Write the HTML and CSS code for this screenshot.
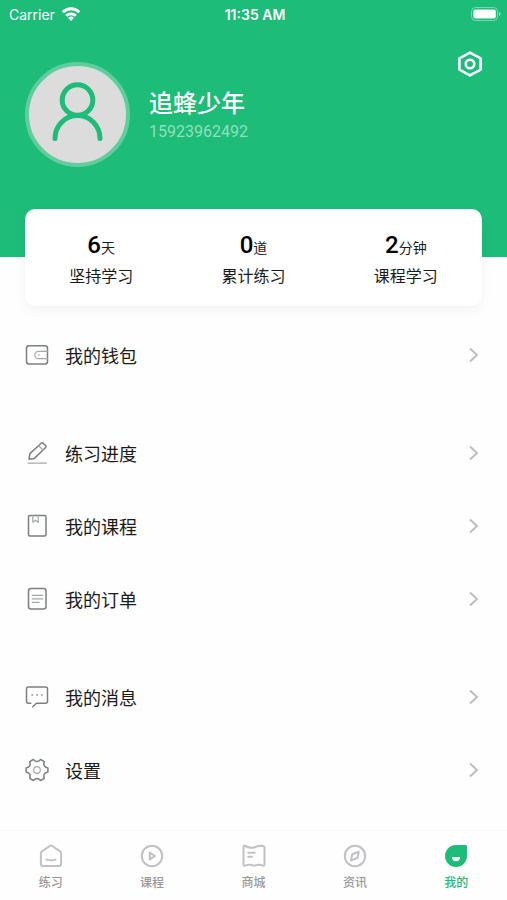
FILE: index.html
```html
<!DOCTYPE html>
<html lang="zh-CN">

<head>
    <meta charset="UTF-8">
    <meta name="viewport" content="width=device-width, initial-scale=1.0">
    <title>我的</title>
    <link rel="stylesheet" href="styles.css">
</head>

<body>

    <header class="header">
        <div class="status-bar">
            <div class="carrier">
                <span>Carrier</span>
                <svg width="20" height="16" viewBox="0 0 20 16" fill="none" stroke="#fff" stroke-width="3">
                    <path d="M1.8 6.2a11.6 11.6 0 0 1 16.4 0" />
                    <path d="M5.2 9.8a6.8 6.8 0 0 1 9.6 0" stroke-width="2.8" />
                    <path d="M10 15l-2.9-3a4.2 4.2 0 0 1 5.8 0z" fill="#fff" stroke="none" />
                </svg>
            </div>
            <span class="time">11:35 AM</span>
            <div class="battery">
                <svg width="30" height="14" viewBox="0 0 30 14">
                    <rect x=".5" y=".5" width="26" height="13" rx="4" fill="none" stroke="#fff" stroke-opacity=".4" />
                    <rect x="2.4" y="2.4" width="22.4" height="9.2" rx="2" fill="#fff" />
                    <path d="M28 5v4c2-.6 2-3.4 0-4z" fill="#fff" fill-opacity=".5" />
                </svg>
            </div>
        </div>

        <button class="setting" type="button" aria-label="设置">
            <svg width="28" height="28" viewBox="0 0 28 28" fill="none" stroke="#fff" stroke-width="2.6" stroke-linejoin="round">
                <path d="M14 2.6l10.600 5.800v11.200L14 25.4 3.4 19.6V8.4z" />
                <circle cx="14" cy="14" r="4.3" />
            </svg>
        </button>

        <div class="user">
            <div class="avatar">
                <svg width="97" height="97" viewBox="0 0 97 97" fill="none" stroke="#1dbc79" stroke-width="5" stroke-linecap="round">
                    <circle cx="48.5" cy="34" r="15.3" />
                    <path d="M26 72.5a22.5 23 0 0 1 45 0" />
                </svg>
            </div>
            <div>
                <h1 class="name">追蜂少年</h1>
                <p class="phone">15923962492</p>
            </div>
        </div>
    </header>

    <section class="stats">
        <div class="stat">
            <p class="stat-value"><b>6</b>天</p>
            <p class="stat-label">坚持学习</p>
        </div>
        <div class="stat">
            <p class="stat-value"><b>0</b>道</p>
            <p class="stat-label">累计练习</p>
        </div>
        <div class="stat">
            <p class="stat-value"><b>2</b>分钟</p>
            <p class="stat-label">课程学习</p>
        </div>
    </section>

    <main class="menu">
        <div class="menu-group">
            <a class="menu-item" href="#wallet">
                <svg class="icon" viewBox="0 0 24 24">
                    <rect x="1.5" y="2.8" width="21" height="18.2" rx="2.5" />
                    <path class="thin" d="M22.5 8.3h-9a3.7 3.7 0 0 0 0 7.4h9M13.2 12h1.2" />
                </svg>
                <span>我的钱包</span>
                <svg class="arrow" viewBox="0 0 16 16"><path d="M4 1.5L11 8l-7 6.5" /></svg>
            </a>
        </div>

        <div class="menu-group">
            <a class="menu-item" href="#progress">
                <svg class="icon" viewBox="0 0 24 24">
                    <path d="M4 18.2l.9-5.600L16.2 2.2q1-.8 2 0l2.400 2.300q.9 1 0 2L9.400 17.400z" />
                    <path class="thin" d="M13.6 4.8l4.6 4.4M3.200 22.200h18" />
                </svg>
                <span>练习进度</span>
                <svg class="arrow" viewBox="0 0 16 16"><path d="M4 1.5L11 8l-7 6.5" /></svg>
            </a>
            <a class="menu-item" href="#course">
                <svg class="icon" viewBox="0 0 24 24">
                    <rect x="3.5" y="1.5" width="17.5" height="20.6" rx="1.5" />
                    <path class="thin" d="M7.800 1.500v6.800l2.700-2 2.700 2V1.500" />
                </svg>
                <span>我的课程</span>
                <svg class="arrow" viewBox="0 0 16 16"><path d="M4 1.5L11 8l-7 6.5" /></svg>
            </a>
            <a class="menu-item" href="#order">
                <svg class="icon" viewBox="0 0 24 24">
                    <rect x="3.5" y="1.5" width="17.5" height="20.6" rx="2.5" />
                    <path class="thin" d="M7.200 8.300h10.600M7.200 11.800h10.600M7.200 15.300h7" />
                </svg>
                <span>我的订单</span>
                <svg class="arrow" viewBox="0 0 16 16"><path d="M4 1.5L11 8l-7 6.5" /></svg>
            </a>
        </div>

        <div class="menu-group">
            <a class="menu-item" href="#message">
                <svg class="icon" viewBox="0 0 24 24">
                    <path d="M5.800 18.200H3.500q-2 0-2-2V4q0-2 2-2h17q2 0 2 2v12.200q0 2-2 2h-9l-3.800 3.600" />
                    <path class="dots" d="M7.200 10h.1M12 10h.1M16.800 10h.1" />
                </svg>
                <span>我的消息</span>
                <svg class="arrow" viewBox="0 0 16 16"><path d="M4 1.5L11 8l-7 6.5" /></svg>
            </a>
            <a class="menu-item" href="#setting">
                <svg class="icon" viewBox="0 0 24 24">
                    <path d="M8.400 1.500Q12 5.700 15.600 1.500L19.300 3.600Q17.500 8.800 22.900 9.900V14.100Q17.500 15.200 19.300 20.400L15.600 22.500Q12 18.300 8.400 22.500L4.700 20.400Q6.500 15.200 1.100 14.100V9.900Q6.500 8.800 4.700 3.600z" />
                    <circle class="thin" cx="12" cy="12" r="3.3" />
                </svg>
                <span>设置</span>
                <svg class="arrow" viewBox="0 0 16 16"><path d="M4 1.5L11 8l-7 6.5" /></svg>
            </a>
        </div>
    </main>

    <nav class="tabbar">
        <a class="tab" href="#practice">
            <svg viewBox="0 0 24 24">
                <path d="M1.900 9.200q0-1.200 1-1.800L10.800 2q1.200-.8 2.400 0l7.900 5.400q1 .6 1 1.800v10.600q0 2.200-2.200 2.200H4.100q-2.200 0-2.200-2.200z" />
                <path d="M7.500 15.600q4.500 1.400 9 0" />
            </svg>
            <span>练习</span>
        </a>
        <a class="tab" href="#lesson">
            <svg viewBox="0 0 24 24">
                <circle cx="12" cy="12" r="10.2" />
                <path d="M9.800 8.600v6.800l5.200-3.400z" />
            </svg>
            <span>课程</span>
        </a>
        <a class="tab" href="#mall">
            <svg viewBox="0 0 24 24">
                <path d="M1.500 3q0-1.600 1.600-1Q7.500 4.400 12 3.600 16.500 1.200 20.900 2q1.600.2 1.600 1.400v17.200q0 1.400-1.600 1Q16.500 19.600 12 21.800 7.500 20 3.100 21.600q-1.600.4-1.600-1z" />
                <path d="M6.200 8.800h6.600M6.200 12.800h3.800" />
            </svg>
            <span>商城</span>
        </a>
        <a class="tab" href="#news">
            <svg viewBox="0 0 24 24">
                <circle cx="12" cy="12" r="10.2" />
                <path d="M9.200 10.300l6.600-2.500-1.400 6.200-6.400 2.400z" />
            </svg>
            <span>资讯</span>
        </a>
        <a class="tab active" href="#mine">
            <svg viewBox="0 0 24 24">
                <path class="leaf" d="M12 1h9.500Q23 1 23 2.500V12A11 11 0 1 1 12 1z" />
                <path class="mouth" d="M8 13h8a4 4.200 0 0 1-8 0z" />
            </svg>
            <span>我的</span>
        </a>
    </nav>

</body>

</html>
```
FILE: styles.css
```css
* {
    box-sizing: border-box;
}

body {
    display: flex;
    flex-direction: column;
    min-height: 100vh;
    margin: 0;
    font-family: "Noto Sans CJK SC", sans-serif;
    color: #1a1a1a;
    background-color: #fefefe;
}

h1,
p {
    margin: 0;
}

a {
    color: inherit;
    text-decoration: none;
}

svg {
    display: block;
    flex: none;
}

/* 顶部 */
.header {
    padding-bottom: 90px;
    color: #fff;
    background-color: #1dbc79;
}

.status-bar {
    display: grid;
    grid-template-columns: 1fr auto 1fr;
    align-items: center;
    height: 28px;
    padding: 0 6px 0 9px;
    font-family: Inter, sans-serif;
    font-size: 14px;
}

.carrier {
    display: flex;
    align-items: center;
    gap: 6px;
}

.time {
    font-weight: 600;
}

.battery {
    justify-self: end;
}

.setting {
    display: block;
    margin: 22px 23px 0 auto;
    padding: 0;
    border: none;
    background: none;
    cursor: pointer;
}

.user {
    display: flex;
    align-items: center;
    gap: 19px;
    margin-top: -16px;
    padding: 0 25px;
}

.avatar {
    border: 4px solid #5fce9c;
    border-radius: 50%;
    background-color: #dcdcdc;
}

.name {
    font-size: 24px;
    font-weight: 500;
    line-height: 32px;
}

.phone {
    margin-top: 2px;
    font-family: Roboto, sans-serif;
    font-size: 16px;
    line-height: 24px;
    color: #93dfbc;
}

/* 学习数据 */
.stats {
    display: flex;
    margin: -48px 25px 0;
    padding: 20px 0 19px;
    border-radius: 10px;
    background-color: #fff;
    box-shadow: 0 4px 12px rgba(0, 0, 0, 0.05);
}

.stat {
    flex: 1;
    text-align: center;
}

.stat-value {
    font-size: 14px;
    line-height: 32px;
}

.stat-value b {
    font-family: Roboto, sans-serif;
    font-size: 24px;
    font-weight: 500;
    color: #000;
}

.stat-label {
    font-size: 16px;
    line-height: 24px;
}

/* 菜单 */
.menu {
    flex: 1;
    padding: 12px 0;
}

.menu-group + .menu-group {
    margin-top: 25px;
}

.menu-item {
    display: flex;
    align-items: center;
    gap: 16px;
    height: 73px;
    padding: 0 25px;
    font-size: 18px;
}

.menu-item span {
    flex: 1;
}

.icon {
    width: 24px;
    height: 24px;
    fill: none;
    stroke: #7c7f80;
    stroke-width: 1.5;
    stroke-linecap: round;
    stroke-linejoin: round;
}

.icon .thin {
    stroke: #a5a8a9;
    stroke-width: 1.2;
}

.icon .dots {
    stroke: #a5a8a9;
    stroke-width: 2;
}

.arrow {
    width: 16px;
    height: 16px;
    fill: none;
    stroke: #bbb;
    stroke-width: 1.8;
}

/* 底部导航 */
.tabbar {
    display: flex;
    height: 70px;
    padding-top: 13px;
    border-top: 1px solid #f8f8f8;
    background-color: #fefefe;
}

.tab {
    display: flex;
    flex: 1;
    flex-direction: column;
    align-items: center;
    gap: 4px;
    font-size: 12px;
    font-weight: 500;
    line-height: 20px;
    color: #999;
}

.tab svg {
    width: 24px;
    height: 24px;
    fill: none;
    stroke: #c0c2c6;
    stroke-width: 2;
    stroke-linecap: round;
    stroke-linejoin: round;
}

.tab.active {
    color: #1dbc79;
}

.tab .leaf {
    fill: #1dbc79;
    stroke: none;
}

.tab .mouth {
    fill: #fff;
    stroke: none;
}
```
